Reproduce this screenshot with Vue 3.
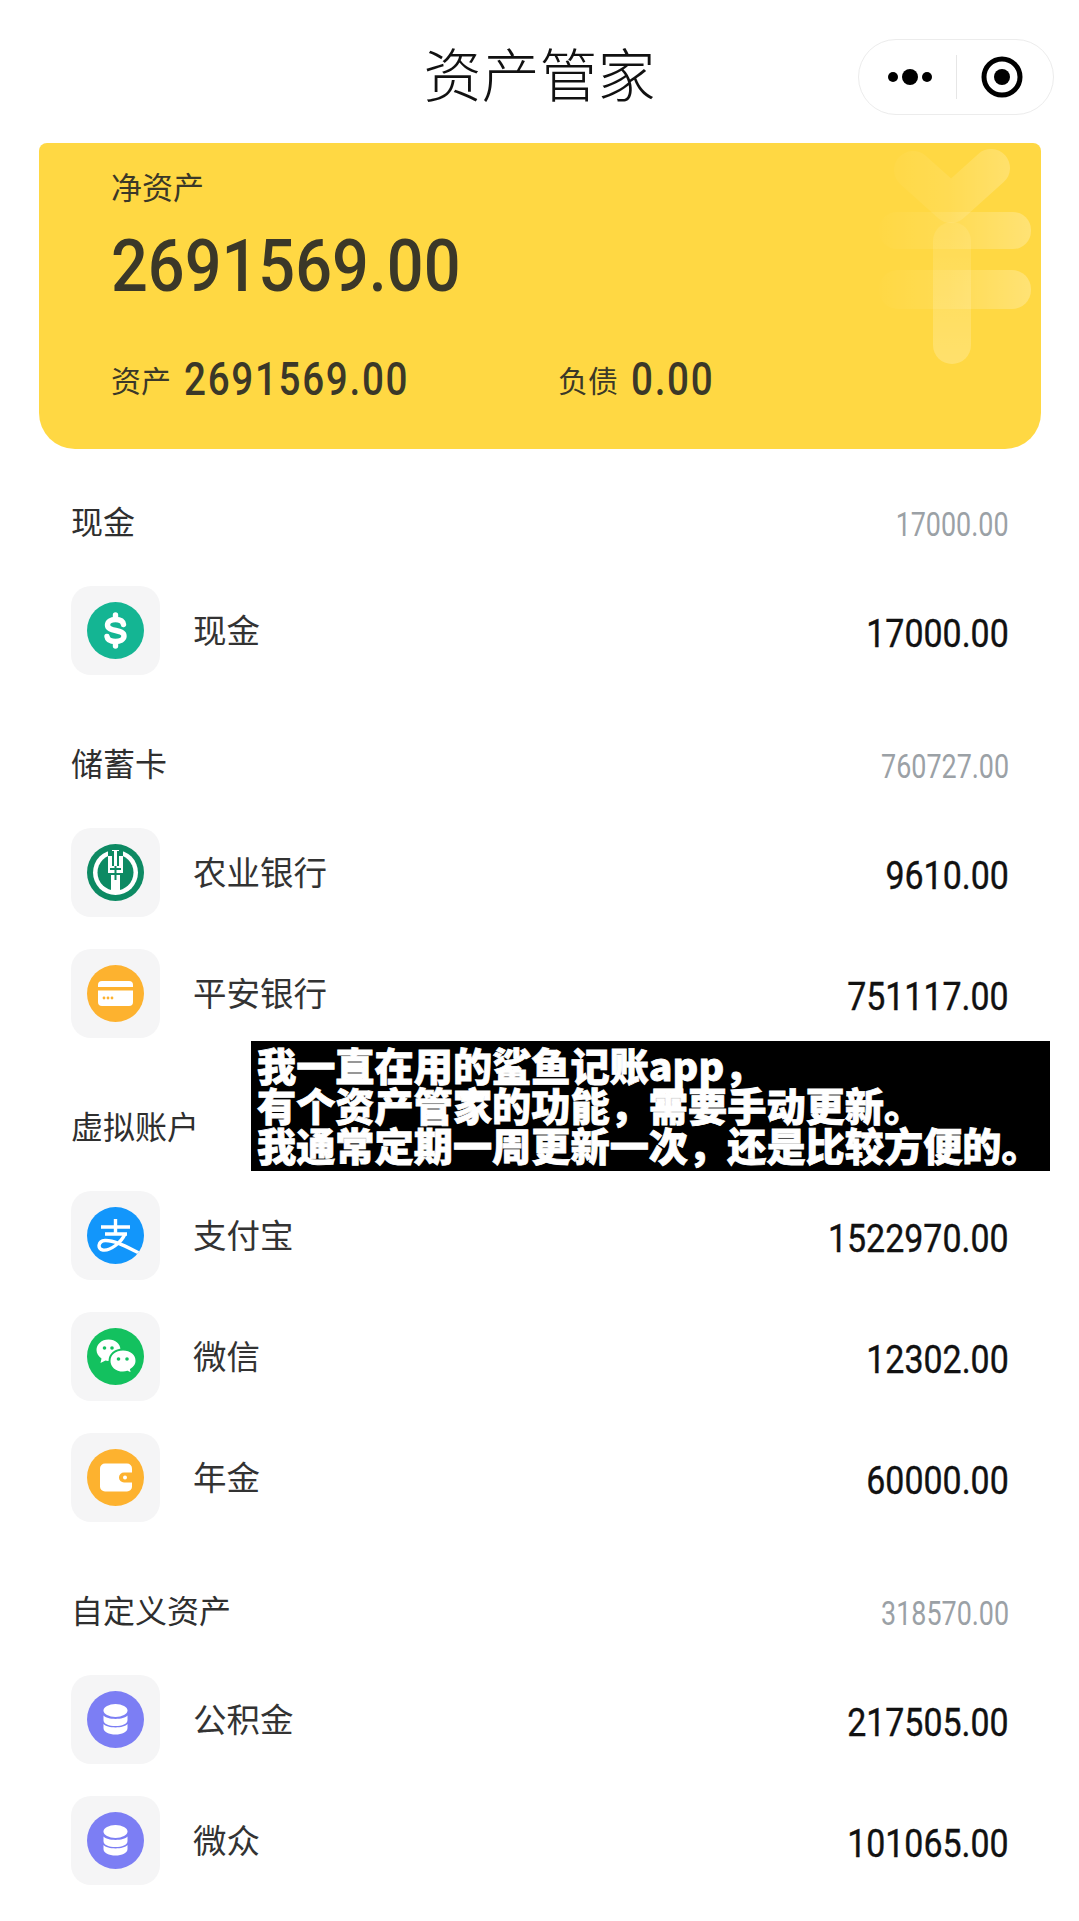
<template>
  <div class="page">
    <header class="nav">
      <h1>资产管家</h1>
      <div class="capsule">
        <svg class="cap-dots" width="60" height="20" viewBox="0 0 60 20">
          <circle cx="13" cy="10" r="5" />
          <circle cx="30" cy="10" r="8" />
          <circle cx="47" cy="10" r="5" />
        </svg>
        <span class="cap-line"></span>
        <svg class="cap-ring" width="42" height="42" viewBox="0 0 42 42">
          <circle cx="21" cy="21" r="18" fill="none" stroke="#000" stroke-width="5" />
          <circle cx="21" cy="21" r="8" fill="#000" />
        </svg>
      </div>
    </header>

    <section class="card">
      <svg class="yen" width="160" height="224" viewBox="0 0 160 224">
        <defs>
          <linearGradient id="yenFade" gradientUnits="userSpaceOnUse" x1="0" y1="0" x2="160" y2="0">
            <stop offset="0" stop-color="#fff" stop-opacity="0.01" />
            <stop offset="0.45" stop-color="#fff" stop-opacity="0.09" />
            <stop offset="1" stop-color="#fff" stop-opacity="0.28" />
          </linearGradient>
          <linearGradient id="yenStem" x1="0" y1="0" x2="0" y2="1">
            <stop offset="0" stop-color="#fff" stop-opacity="0.08" />
            <stop offset="1" stop-color="#fff" stop-opacity="0.22" />
          </linearGradient>
        </defs>
        <path d="M34 28 L72 62 L112 26" fill="none" stroke="url(#yenFade)" stroke-width="38" stroke-linecap="round" stroke-linejoin="round" />
        <rect x="0" y="70" width="152" height="37" rx="18" fill="url(#yenFade)" />
        <rect x="0" y="128" width="152" height="39" rx="19" fill="url(#yenFade)" />
        <rect x="54" y="80" width="38" height="142" rx="19" fill="url(#yenStem)" />
      </svg>
      <div class="net-label">净资产</div>
      <div class="net-value"><span class="num">2691569.00</span></div>
      <div class="sub-row">
        <div class="sub-item sub-assets">
          <span class="sub-label">资产</span>
          <span class="sub-value">2691569.00</span>
        </div>
        <div class="sub-item">
          <span class="sub-label">负债</span>
          <span class="sub-value">0.00</span>
        </div>
      </div>
    </section>

    <section v-for="group in groups" :key="group.name" class="group">
      <div class="group-head">
        <span class="group-name">{{ group.name }}</span>
        <span class="group-total">{{ group.total }}</span>
      </div>
      <div class="rows">
        <div v-for="item in group.items" :key="item.name" class="row">
          <div class="tile">
            <svg width="57" height="57" viewBox="0 0 57 57">
              <template v-if="item.icon === 'cash'">
                <circle cx="28.5" cy="28.5" r="28.5" fill="#14b593" />
                <path d="M36.500 22.500C36 19 33 17.500 28.500 17.500C24 17.500 20.500 19.500 20.500 23C20.500 30.500 37 26.500 37 34C37 37.500 33 39.500 28.500 39.500C24 39.500 20.500 38 20 34.500" fill="none" stroke="#fff" stroke-width="5.400" stroke-linecap="round" />
                <path d="M28.500 13V17M28.500 40V44" stroke="#fff" stroke-width="5.400" stroke-linecap="round" />
              </template>
              <template v-else-if="item.icon === 'abc'">
                <circle cx="28.5" cy="28.5" r="28.5" fill="#0d8a63" />
                <circle cx="28.5" cy="28.5" r="22.5" fill="#fff" />
                <circle cx="28.5" cy="28.5" r="18" fill="#0d8a63" />
                <path d="M21 6H36V29H33V48H24V29H21Z" fill="#fff" />
                <path d="M25 7H27V22H25ZM30 7H32V22H30ZM23 24H34V26H23ZM23 29H34V31H23ZM27.5 22H29.5V36H27.5Z" fill="#0d8a63" />
                <path d="M21 3H25V12H21ZM32 3H36V12H32Z" fill="#0d8a63" />
              </template>
              <template v-else-if="item.icon === 'card'">
                <circle cx="28.5" cy="28.5" r="28.5" fill="#fdb22f" />
                <path d="M15 16H42A4 4 0 0 1 46 20V22H11V20A4 4 0 0 1 15 16Z" fill="#fff" />
                <path d="M11 25.5H46V37A4 4 0 0 1 42 41H15A4 4 0 0 1 11 37Z" fill="#fff" />
                <circle cx="17" cy="33" r="1.4" fill="#fdb22f" />
                <circle cx="21" cy="33" r="1.4" fill="#fdb22f" />
                <circle cx="25" cy="33" r="1.4" fill="#fdb22f" />
              </template>
              <template v-else-if="item.icon === 'alipay'">
                <circle cx="28.5" cy="28.5" r="28.5" fill="#1296fb" />
                <clipPath id="aliClip"><circle cx="28.5" cy="28.5" r="28.5" /></clipPath>
                <g clip-path="url(#aliClip)" fill="none" stroke="#fff" stroke-width="3.4">
                  <path d="M14 20H43M18 27H40M28.5 12V27" />
                  <path d="M38 27C34 36 23 44 16 43C10 42 11 34 18 33.5C29 33 43 42 58 49" />
                </g>
              </template>
              <template v-else-if="item.icon === 'wechat'">
                <circle cx="28.5" cy="28.5" r="28.5" fill="#13c15f" />
                <path d="M21.5 11.5C14.5 11.5 9.5 16.500 9.500 22C9.500 25.500 11.500 28.500 14.500 30.500L13.500 35L18.500 32.500C20 33 22 33 24 33C31.500 33 33.500 27 33.500 22C33.500 16 28.500 11.500 21.500 11.500Z" fill="#fff" />
                <path d="M36 21.500C28 21.500 22.500 26.500 22.500 33C22.500 39.500 28 44.500 36 44.500C37.500 44.500 39 44.300 40.500 43.800L45 46L44 41.500C47.500 39.500 49.500 36.500 49.500 33C49.500 26.500 44 21.500 36 21.500Z" fill="#fff" stroke="#13c15f" stroke-width="2" />
                <circle cx="17.500" cy="20" r="1.800" fill="#13c15f" />
                <circle cx="25" cy="20" r="1.800" fill="#13c15f" />
                <circle cx="31.500" cy="31" r="1.800" fill="#13c15f" />
                <circle cx="40" cy="31" r="1.800" fill="#13c15f" />
              </template>
              <template v-else-if="item.icon === 'wallet'">
                <circle cx="28.5" cy="28.5" r="28.5" fill="#fdb22f" />
                <rect x="13" y="14.500" width="32" height="28" rx="5" fill="#fff" />
                <path d="M37 23.500H45V33.500H37A5 5 0 0 1 37 23.500Z" fill="#fdb22f" />
                <circle cx="38" cy="28.500" r="2" fill="#fff" />
              </template>
              <template v-else>
                <circle cx="28.5" cy="28.5" r="28.5" fill="#7c7ef4" />
                <ellipse cx="28.5" cy="19.500" rx="12" ry="6.500" fill="#fff" />
                <path d="M16.500 24.500C20 29 37 29 40.500 24.500V29C40.500 33 35 35 28.500 35C22 35 16.500 33 16.500 29Z" fill="#fff" />
                <path d="M16.500 33C20 37.500 37 37.500 40.500 33V37C40.500 41 35 43.500 28.500 43.500C22 43.500 16.500 41 16.500 37Z" fill="#fff" />
              </template>
            </svg>
          </div>
          <span class="row-name">{{ item.name }}</span>
          <span class="row-amount">{{ item.amount }}</span>
        </div>
      </div>
    </section>

    <div class="caption">
      <div>我一直在用的鲨鱼记账app&#xFF0C;</div>
      <div>有个资产管家的功能&#xFF0C;需要手动更新。</div>
      <div>我通常定期一周更新一次&#xFF0C;还是比较方便的。</div>
    </div>
  </div>
</template>

<script setup>
const groups = [
  {
    name: '现金',
    total: '17000.00',
    items: [{ name: '现金', amount: '17000.00', icon: 'cash' }]
  },
  {
    name: '储蓄卡',
    total: '760727.00',
    items: [
      { name: '农业银行', amount: '9610.00', icon: 'abc' },
      { name: '平安银行', amount: '751117.00', icon: 'card' }
    ]
  },
  {
    name: '虚拟账户',
    total: '',
    items: [
      { name: '支付宝', amount: '1522970.00', icon: 'alipay' },
      { name: '微信', amount: '12302.00', icon: 'wechat' },
      { name: '年金', amount: '60000.00', icon: 'wallet' }
    ]
  },
  {
    name: '自定义资产',
    total: '318570.00',
    items: [
      { name: '公积金', amount: '217505.00', icon: 'coins' },
      { name: '微众', amount: '101065.00', icon: 'coins' }
    ]
  }
]
</script>

<style>
html, body {
  margin: 0;
  background: #fff;
}
</style>

<style scoped>
.page {
  position: relative;
  width: 1079px;
  height: 1921px;
  overflow: hidden;
  background: #fff;
  font-family: "Noto Sans CJK SC", "Noto Sans", sans-serif;
  color: #333;
}

.nav {
  height: 143px;
  display: flex;
  align-items: center;
  justify-content: center;
  box-sizing: border-box;
}
.nav h1 {
  margin: 0;
  font-size: 58px;
  font-weight: 300;
  line-height: 1;
  color: #111;
}
.capsule {
  position: absolute;
  top: 39px;
  left: 858px;
  width: 196px;
  height: 76px;
  box-sizing: border-box;
  border: 1px solid #ececec;
  border-radius: 38px;
  display: flex;
  align-items: center;
  background: #fff;
}
.cap-dots { margin-left: 21px; }
.cap-line {
  width: 1px;
  height: 44px;
  background: #e6e6e6;
  margin-left: 16px;
}
.cap-ring { margin-left: 24px; }
.cap-dots circle { fill: #000; }

.card {
  position: relative;
  margin: 0 38px 0 39px;
  height: 306px;
  background: #ffd843;
  border-radius: 8px 8px 36px 36px;
  padding: 23px 0 0 72px;
  box-sizing: border-box;
  overflow: hidden;
  color: #3b3828;
}
.yen {
  position: absolute;
  left: 840px;
  top: -1px;
}
.net-label {
  position: relative;
  font-size: 31px;
  line-height: 40px;
}
.net-value {
  position: relative;
  margin-top: 19px;
  height: 84px;
  font-family: Roboto, "Liberation Sans", sans-serif;
  font-weight: 500;
  font-size: 72px;
  line-height: 84px;
}
.num {
  display: inline-block;
  transform: scaleX(0.9);
  transform-origin: left center;
}
.sub-row {
  position: relative;
  display: flex;
  margin-top: 45px;
  height: 50px;
  align-items: center;
}
.sub-item {
  display: flex;
  align-items: center;
}
.sub-assets { width: 447px; }
.sub-label {
  font-size: 30px;
  line-height: 50px;
  width: 73px;
}
.sub-value {
  font-family: Roboto, "Liberation Sans", sans-serif;
  font-weight: 500;
  font-size: 46px;
  letter-spacing: 2px;
  line-height: 50px;
  transform: scaleX(0.84);
  transform-origin: left center;
}

.group {
  padding: 0 70px 0 71px;
  margin-top: 69px;
}
.card + .group { margin-top: 53px; }
.group-head {
  display: flex;
  justify-content: space-between;
  align-items: center;
  height: 40px;
  margin-bottom: 44px;
}
.group-name {
  font-size: 32px;
  line-height: 40px;
  color: #2f2f2f;
  padding-bottom: 5px;
}
.group-total {
  font-family: Roboto, "Liberation Sans", sans-serif;
  font-size: 33px;
  line-height: 40px;
  color: #9ba1a6;
  transform: scaleX(0.815);
  transform-origin: right center;
  padding-top: 6px;
}
.rows {
  display: flex;
  flex-direction: column;
  gap: 32px;
}
.row {
  display: flex;
  align-items: center;
  height: 89px;
}
.tile {
  width: 89px;
  height: 89px;
  border-radius: 20px;
  background: #f5f5f6;
  display: flex;
  align-items: center;
  justify-content: center;
  flex-shrink: 0;
}
.row-name {
  margin-left: 33px;
  font-size: 33.5px;
  color: #333;
  padding-bottom: 4px;
}
.row-amount {
  margin-left: auto;
  font-family: Roboto, "Liberation Sans", sans-serif;
  font-weight: 400;
  font-size: 39px;
  color: #111;
  padding-top: 7px;
  transform: scaleX(0.87);
  transform-origin: right center;
  -webkit-text-stroke: 0.4px #111;
}

.caption {
  position: absolute;
  left: 251px;
  top: 1041px;
  width: 799px;
  height: 130px;
  box-sizing: border-box;
  padding: 3px 0 0 6px;
  background: #000;
  color: #fff;
  font-size: 39.2px;
  font-weight: 900;
  line-height: 40px;
  white-space: nowrap;
  -webkit-text-stroke: 0.8px #fff;
}
</style>
